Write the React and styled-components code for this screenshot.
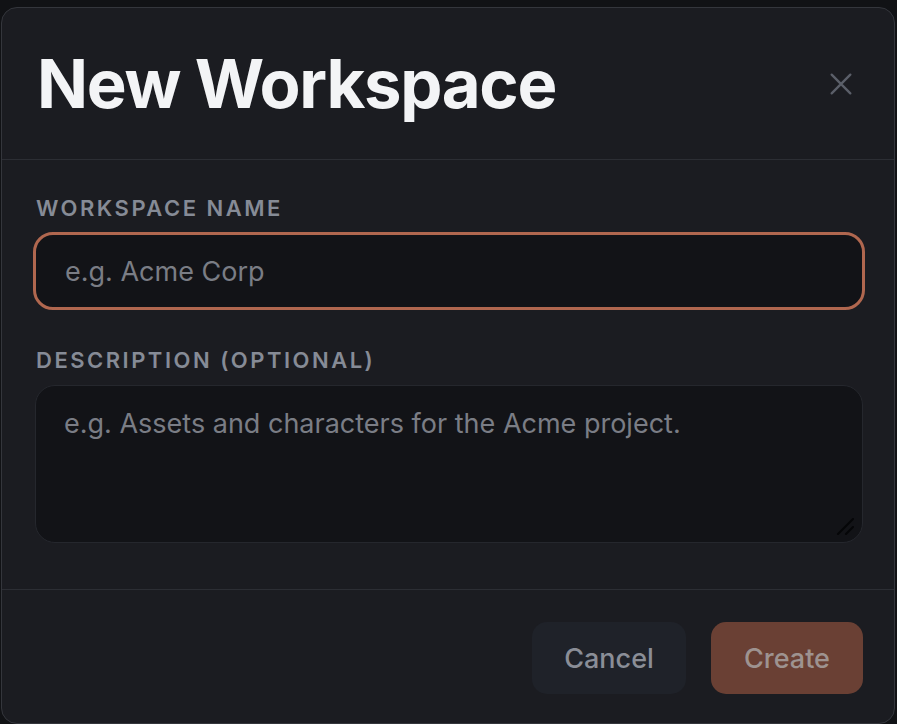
import React from 'react';
import styled, { createGlobalStyle } from 'styled-components';

const GlobalStyle = createGlobalStyle`
  html, body {
    margin: 0;
    padding: 0;
    background: #111215;
    font-family: Inter, "Noto Sans", sans-serif;
    color-scheme: dark;
  }
  #root {
    min-height: 724px;
  }
`;

const Page = styled.div`
  width: 897px;
  height: 724px;
  padding: 7px 2px 0 1px;
  box-sizing: border-box;
  overflow: hidden;
`;

const Modal = styled.div`
  width: 894px;
  height: 717px;
  box-sizing: border-box;
  background: #1b1c21;
  border: 1.5px solid #34363c;
  border-radius: 16px;
  display: flex;
  flex-direction: column;
`;

const Header = styled.header`
  height: 152px;
  flex-shrink: 0;
  box-sizing: border-box;
  padding: 0 38px 0 35px;
  display: flex;
  align-items: center;
  justify-content: space-between;
  border-bottom: 1.5px solid #2c2e34;
`;

const Title = styled.h1`
  margin: 0;
  font-size: 67px;
  font-weight: 700;
  letter-spacing: -1.3px;
  color: #f3f4f6;
  line-height: 1;
`;

const CloseButton = styled.button`
  background: none;
  border: none;
  padding: 0;
  width: 30px;
  height: 30px;
  display: flex;
  align-items: center;
  justify-content: center;
  cursor: pointer;
  color: #5b5f69;
`;

const Body = styled.div`
  flex: 1;
  padding: 35px 29.5px 0 31px;
  display: flex;
  flex-direction: column;
  border-bottom: 1.5px solid #2c2e34;
`;

const Field = styled.div`
  display: flex;
  flex-direction: column;
  gap: ${(p) => p.$gap || 12}px;
  margin-bottom: ${(p) => p.$mb || 0}px;
`;

const Label = styled.label`
  font-size: 22px;
  font-weight: 600;
  letter-spacing: 2.5px;
  text-transform: uppercase;
  color: #868b96;
  padding-left: 3px;
  line-height: 26px;
`;

const TextInput = styled.input`
  height: 78px;
  flex-shrink: 0;
  box-sizing: border-box;
  background: #121317;
  border: 3px solid #b0674f;
  border-radius: 20px;
  padding: 0 29px;
  font-family: inherit;
  font-size: 27px;
  color: #e5e7eb;
  outline: none;
  caret-color: #8a8f99;

  &::placeholder {
    color: #7a7d85;
  }
`;

const AreaWrap = styled.div`
  position: relative;
  margin: 0 2px;
`;

const TextArea = styled.textarea`
  display: block;
  width: 100%;
  height: 158px;
  box-sizing: border-box;
  background: #121317;
  border: 1.5px solid #25272d;
  border-radius: 20px;
  padding: 21px 28px;
  font-family: inherit;
  font-size: 27px;
  line-height: 34px;
  color: #e5e7eb;
  outline: none;
  resize: none;

  &::placeholder {
    color: #7a7d85;
  }
`;

const Grip = styled.svg`
  position: absolute;
  right: 8px;
  bottom: 8px;
  pointer-events: none;
`;

const Footer = styled.footer`
  height: 133px;
  flex-shrink: 0;
  box-sizing: border-box;
  padding: 32px 31px 0 0;
  display: flex;
  justify-content: flex-end;
  align-items: flex-start;
  gap: 25px;
`;

const Button = styled.button`
  height: 72px;
  width: ${(p) => p.$w}px;
  border: none;
  border-radius: 15px;
  font-family: inherit;
  font-size: 27px;
  font-weight: 500;
  cursor: pointer;
  background: ${(p) => (p.$primary ? '#6a4034' : '#1f2229')};
  color: ${(p) => (p.$primary ? '#9e9390' : '#8a8e97')};
`;

export default function App() {
  return (
    <>
      <GlobalStyle />
      <Page>
        <Modal>
          <Header>
            <Title>New Workspace</Title>
            <CloseButton aria-label="Close">
              <svg width="28" height="28" viewBox="0 0 24 24" fill="none" stroke="currentColor" strokeWidth="2" strokeLinecap="round">
                <path d="M4 4l16 16M20 4L4 20" />
              </svg>
            </CloseButton>
          </Header>
          <Body>
            <Field $mb={37} $gap={11}>
              <Label htmlFor="ws-name">Workspace Name</Label>
              <TextInput id="ws-name" placeholder="e.g. Acme Corp" autoFocus />
            </Field>
            <Field $gap={12}>
              <Label htmlFor="ws-desc">Description (Optional)</Label>
              <AreaWrap>
                <TextArea id="ws-desc" placeholder="e.g. Assets and characters for the Acme project." />
                <Grip width="20" height="20" viewBox="0 0 20 20">
                  <path d="M3 19L18 4M11 19L18 12" stroke="#050608" strokeWidth="2" strokeLinecap="round" />
                </Grip>
              </AreaWrap>
            </Field>
          </Body>
          <Footer>
            <Button $w={154}>Cancel</Button>
            <Button $w={152} $primary>Create</Button>
          </Footer>
        </Modal>
      </Page>
    </>
  );
}
